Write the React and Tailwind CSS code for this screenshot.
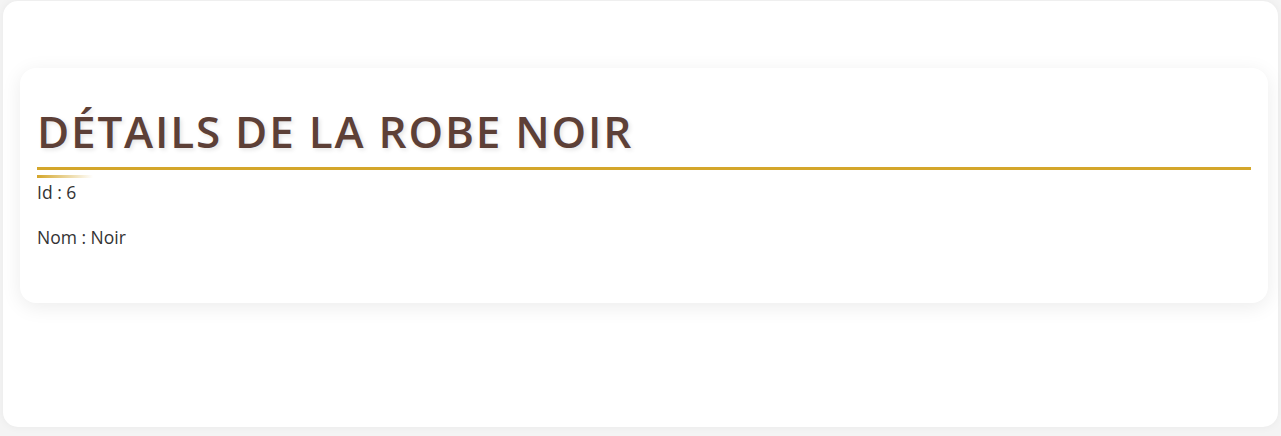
export default function App() {
  return (
    <div className="h-[436px] bg-[#f4f4f4] px-[3px] pt-px pb-[9px] font-['Open_Sans',sans-serif]">
      <div className="h-full rounded-[15px] bg-white shadow-[0_0_8px_rgba(0,0,0,0.05)] pl-[17px] pr-[10px] pt-[67px]">
        <div className="rounded-[16px] bg-white shadow-[0_4px_20px_rgba(0,0,0,0.08)] px-[17px] pt-[33px] pb-[54px]">
          <h2 className="text-[44px] leading-[60px] font-semibold tracking-[1.8px] text-[#5D4037] [text-shadow:2px_2px_4px_rgba(0,0,0,0.1)] pb-[6px] border-b-[3px] border-[#D4A62A]">
            DÉTAILS DE LA ROBE NOIR
          </h2>
          <div className="mt-[5px] h-[3px] w-[56px] bg-gradient-to-r from-[#D4A62A] to-transparent" />
          <p className="mt-[2px] text-[17.5px] leading-[24px] text-[#333]">Id : 6</p>
          <p className="mt-[21px] text-[17.5px] leading-[24px] text-[#333]">Nom : Noir</p>
        </div>
      </div>
    </div>
  );
}
